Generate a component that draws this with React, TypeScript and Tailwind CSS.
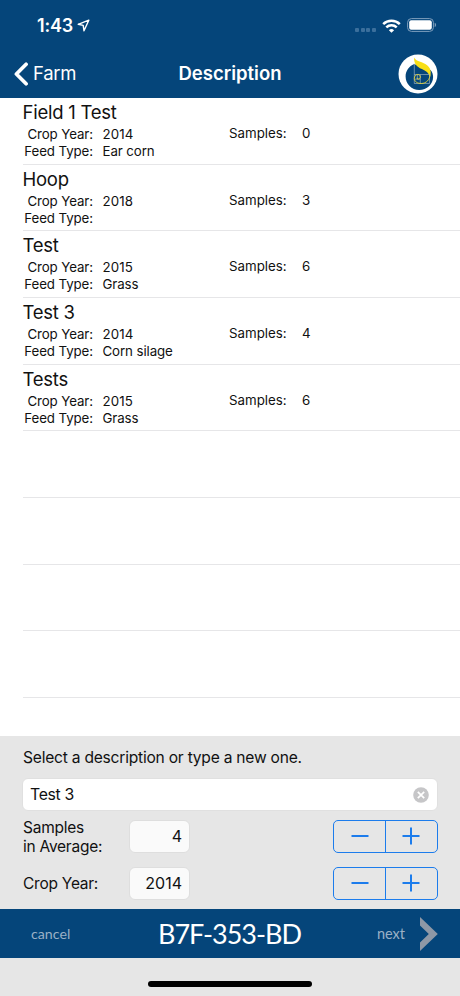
import clsx from 'clsx'

type Field = {
    name: string
    cropYear: string
    feedType: string
    samples: number
}

const fields: Field[] = [
    { name: 'Field 1 Test', cropYear: '2014', feedType: 'Ear corn', samples: 0 },
    { name: 'Hoop', cropYear: '2018', feedType: '', samples: 3 },
    { name: 'Test', cropYear: '2015', feedType: 'Grass', samples: 6 },
    { name: 'Test 3', cropYear: '2014', feedType: 'Corn silage', samples: 4 },
    { name: 'Tests', cropYear: '2015', feedType: 'Grass', samples: 6 },
]

const emptyRows = [0, 1, 2, 3]

function StatusBar() {
    return (
        <div className="flex h-[51px] items-center pl-[37px] pr-[23px]">
            <span className="text-[18px] font-semibold leading-[20px] tracking-[-0.2px]">1:43</span>
            <svg className="ml-[4px] mt-[-1px]" width="13" height="13" viewBox="0 0 13 13" fill="none" stroke="currentColor" strokeWidth="1.4" strokeLinejoin="round">
                <path d="M11.8 1.2 1.2 5.3l5 1.1.8 5.4z" />
            </svg>
            <div className="ml-auto mt-[9px] flex gap-[1.6px]">
                {[0, 1, 2, 3].map((dot) => (
                    <span key={dot} className="size-[4px] rounded-[1px] bg-[#3b6f9c]" />
                ))}
            </div>
            <svg className="ml-[6px]" width="19" height="14" viewBox="0 0 19 14" fill="none" stroke="currentColor" strokeWidth="2.5">
                <path d="M1.2 5.1a11.8 11.8 0 0 1 16.6 0" />
                <path d="M4.3 8.4a7.4 7.4 0 0 1 10.4 0" />
                <path d="M9.5 13.8 6.9 11.2a3.7 3.7 0 0 1 5.2 0z" fill="currentColor" stroke="none" />
            </svg>
            <svg className="ml-[6px] mt-[-1px]" width="30" height="14" viewBox="0 0 30 14">
                <rect x="0.6" y="0.6" width="25.8" height="12.8" rx="3.8" fill="none" stroke="#7f9fbd" strokeWidth="1" />
                <rect x="2.2" y="2.2" width="22.6" height="9.6" rx="2" fill="#fff" />
                <path d="M27.7 4.8a2.4 2.4 0 0 1 0 4.4z" fill="#7f9fbd" />
            </svg>
        </div>
    )
}

function Logo() {
    return (
        <svg width="40" height="40" viewBox="0 0 40 40" fill="none">
            <circle cx="20" cy="20" r="19.5" fill="#fff" />
            <path d="M16.2 10C11 12 7.6 17 7.6 22.6 7.6 30.2 13.7 36 21.2 36c7.7 0 13.9-5.8 13.9-13 0-2.4-.8-5-2.6-7L24 13z" fill="#05457a" />
            <path d="M16.2 3.4c1.6 3.1 4.8 3.7 9 5.5 6 2.6 9.200 6.800 6.700 14.300-1.100-4.300-4-6.500-8-8.200-5.400-2.300-8.300-6-7.700-11.600z" fill="#f8df16" />
            <path d="M16.3 9.5v20M16.3 20.500h15.2v9H16.3M22.3 20.500v9M16.3 25.200h6M19.4 20.500v4.700" stroke="#a9bccb" strokeWidth="0.6" />
            <path d="M31.9 20.5c.3 5-3.8 9-8.6 9-3.9 0-7-2-7-5 0-2.2 1.4-4 3.5-4 1.500 0 2.500 1 2.500 2.400 0 1.300-.9 2.200-2.100 2.200-.9 0-1.400-.6-1.400-1.300" stroke="#e5d432" strokeWidth="0.9" />
        </svg>
    )
}

function Header() {
    return (
        <header className="h-[98px] bg-[#05457a] text-white">
            <StatusBar />
            <div className="grid h-[46px] grid-cols-3 items-center pl-[14px] pr-[22px]">
                <div className="flex items-center">
                    <svg width="15" height="24" viewBox="0 0 15 24" fill="none" stroke="currentColor" strokeWidth="3.7" strokeLinecap="round" strokeLinejoin="round">
                        <path d="M12.1 2.2 2.4 12l9.7 9.8" />
                    </svg>
                    <span className="ml-1 text-[18.5px] tracking-[-0.3px]">Farm</span>
                </div>
                <h1 className="ml-[8px] text-center text-[18.5px] font-semibold">Description</h1>
                <div className="flex justify-end">
                    <Logo />
                </div>
            </div>
        </header>
    )
}

function FieldRow({ field }: { field: Field }) {
    return (
        <li className="flex h-[66.67px] border-b border-[#e6e6e8]">
            <div className="w-[206px] pt-[4px]">
                <h2 className="-ml-[0.5px] text-[18.5px] leading-[21px] tracking-[-0.25px]">{field.name}</h2>
                <dl className="mt-[3px] grid grid-cols-[70px_1fr] gap-x-[9.5px] text-[13.3px] leading-[17px] tracking-[-0.1px]">
                    <dt className="text-right">Crop Year:</dt>
                    <dd className="tracking-[0.1px]">{field.cropYear}</dd>
                    <dt className="whitespace-nowrap text-right">Feed Type:</dt>
                    <dd>{field.feedType}</dd>
                </dl>
            </div>
            <div className="flex pt-[27px] text-[13.3px] leading-[17px]">
                <span className="w-[73px]">Samples:</span>
                <span>{field.samples}</span>
            </div>
        </li>
    )
}

function Stepper({ label }: { label: string }) {
    return (
        <div className="grid h-[33px] w-[105px] grid-cols-[52px_1fr] overflow-hidden rounded-[5px] border border-[#1c7cec] text-[#1c7cec]">
            <button aria-label={`Decrease ${label}`} className="flex items-center justify-center border-r border-[#1c7cec]">
                <svg width="18" height="18" viewBox="0 0 18 18" stroke="currentColor" strokeWidth="2">
                    <path d="M.5 9h17" />
                </svg>
            </button>
            <button aria-label={`Increase ${label}`} className="flex items-center justify-center pr-px">
                <svg width="18" height="18" viewBox="0 0 18 18" stroke="currentColor" strokeWidth="2">
                    <path d="M.5 9h17M9 .5v17" />
                </svg>
            </button>
        </div>
    )
}

function NumberRow({ label, value, className }: { label: string; value: string; className?: string }) {
    return (
        <div className={clsx('flex h-[34px] items-center', className)}>
            <span className="w-[106px] whitespace-pre-line pt-[3px] text-[15.5px] leading-[18.5px] tracking-[-0.25px]">{label}</span>
            <div className="flex h-[33px] w-[61px] items-center justify-end rounded-[6px] border border-[#dedede] bg-[#fafafa] pr-[7px] text-[16px]">{value}</div>
            <div className="ml-auto">
                <Stepper label={label} />
            </div>
        </div>
    )
}

function DescriptionForm() {
    return (
        <section className="h-[173px] bg-[#e6e6e6] pl-[23px] pr-[22px] pt-[12px]">
            <p className="text-[15.6px] leading-[20px] tracking-[-0.23px]">Select a description or type a new one.</p>
            <div className="-ml-px mt-[10px] flex h-[33px] items-center justify-between rounded-[6px] border border-[#e0e0e0] bg-white pl-[7px] pr-[8px]">
                <span className="text-[15.8px] tracking-[-0.3px]">Test 3</span>
                <svg width="16" height="16" viewBox="0 0 16 16">
                    <circle cx="8" cy="8" r="7.8" fill="#c6c6c8" />
                    <path d="m4.8 4.8 6.4 6.4m0-6.4-6.4 6.4" stroke="#fff" strokeWidth="1.7" />
                </svg>
            </div>
            <NumberRow className="mt-[8px]" label={'Samples\nin Average:'} value="4" />
            <NumberRow className="mt-[13px]" label="Crop Year:" value="2014" />
        </section>
    )
}

function Footer() {
    return (
        <footer className="bg-[#e6e6e6]">
            <div className="grid h-[49px] grid-cols-[1fr_auto_1fr] items-center bg-[#05457a] pl-[31px] pr-[22px] font-[Lato,sans-serif]">
                <button className="text-left text-[14.2px] text-[#9bb0c6]">cancel</button>
                <span className="mr-[10px] text-[27px] leading-[30px] tracking-[-1px] text-white">B7F-353-BD</span>
                <button className="flex items-center justify-end text-[14.5px] text-[#9bb0c6]">
                    next
                    <svg className="ml-[15px]" width="18" height="34" viewBox="0 0 18 34">
                        <path d="M0 0v8.5L8.8 17 0 25.5V34l17.8-17z" fill="#8f98a6" />
                    </svg>
                </button>
            </div>
            <div className="flex h-[38px] justify-center pt-[23px]">
                <div className="h-[6px] w-[164px] rounded-full bg-black" />
            </div>
        </footer>
    )
}

function App() {
    return (
        <div className="flex h-[996px] w-[460px] flex-col overflow-hidden bg-white font-[Inter,sans-serif] text-[#111]">
            <Header />
            <ul className="h-[638px] pl-[23px]">
                {fields.map((field) => (
                    <FieldRow key={field.name} field={field} />
                ))}
                {emptyRows.map((row) => (
                    <li key={row} className="h-[66.67px] border-b border-[#e6e6e8]" />
                ))}
            </ul>
            <DescriptionForm />
            <Footer />
        </div>
    )
}

export default App
